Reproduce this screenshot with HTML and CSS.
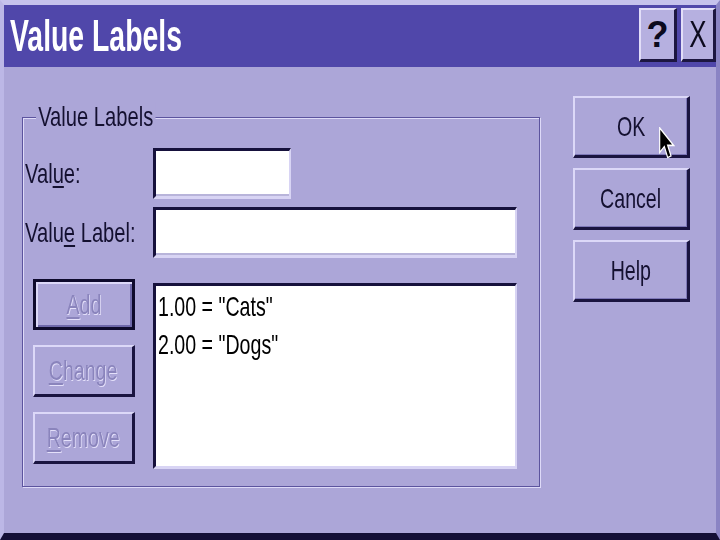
FILE: index.html
```html
<!DOCTYPE html>
<html>
<head>
<meta charset="utf-8">
<link rel="stylesheet" href="styles.css">
</head>
<body>
<div class="window">
  <div class="titlebar">
    <span class="title">Value Labels</span>
    <div class="tbtns">
      <span class="tbtn help">?</span>
      <span class="tbtn close"><span class="x">X</span></span>
    </div>
  </div>
  <div class="content">
    <div class="group">
      <span class="legend">Value Labels</span>
      <div class="row">
        <span class="lbl"><span class="sq">Val<u>u</u>e:</span></span>
        <div class="field short"></div>
      </div>
      <div class="row row2">
        <span class="lbl"><span class="sq">Valu<u>e</u> Label:</span></span>
        <div class="field long"></div>
      </div>
      <div class="row3">
        <div class="side-btns">
          <div class="btn default disabled"><span class="t"><u>A</u>dd</span></div>
          <div class="btn disabled"><span class="t"><u>C</u>hange</span></div>
          <div class="btn disabled"><span class="t"><u>R</u>emove</span></div>
        </div>
        <div class="list">
          <div class="item"><span class="sq">1.00 = "Cats"</span></div>
          <div class="item"><span class="sq">2.00 = "Dogs"</span></div>
        </div>
      </div>
    </div>
    <div class="actions">
      <div class="btn act"><span class="t">OK</span></div>
      <div class="btn act"><span class="t">Cancel</span></div>
      <div class="btn act"><span class="t">Help</span></div>
    </div>
  </div>
  <svg class="cursor" viewBox="0 0 12 20" preserveAspectRatio="none" width="16" height="34">
    <polygon points="0.5,0.5 0.5,15 4,11.5 6.5,18 9,17 6.5,10.8 11,10.8" fill="#000" stroke="#fff" stroke-width="0.9"/>
  </svg>
</div>
</body>
</html>
```
FILE: styles.css
```css
* { box-sizing: border-box; }
html, body { margin: 0; padding: 0; }
body {
  width: 720px;
  height: 540px;
  overflow: hidden;
  background: #aca6d8;
  font-family: "Liberation Sans", Arial, sans-serif;
  color: #141030;
}
.window {
  position: relative;
  width: 720px;
  height: 540px;
  background: #aca6d8;
  border-top: 5px solid #c6c2ec;
  border-left: 4px solid #bcb7e6;
  border-right: 4px solid #8a84c4;
  border-bottom: 7px solid #140f36;
  display: flex;
  flex-direction: column;
}
.titlebar {
  height: 62px;
  flex: none;
  background: #5047aa;
  display: flex;
  align-items: center;
  padding: 0 0 0 6px;
}
.title {
  display: inline-block;
  white-space: nowrap;
  color: #fff;
  font-weight: bold;
  font-size: 44px;
  transform: scaleX(0.645);
  transform-origin: left center;
  width: 180px;
}
.tbtns {
  margin-left: auto;
  display: flex;
  gap: 4px;
  align-self: flex-start;
  margin-top: 3px;
}
.tbtn {
  height: 54px;
  background: #b6b0e0;
  border-top: 2px solid #e2def8;
  border-left: 2px solid #e2def8;
  border-right: 3px solid #1c1640;
  border-bottom: 3px solid #1c1640;
  display: flex;
  align-items: center;
  justify-content: center;
  color: #0c0a1e;
  font-size: 36px;
}
.help { width: 38px; font-weight: bold; }
.close { width: 35px; }
.x { display: inline-block; transform: scaleX(0.72); }

.content {
  flex: 1;
  display: flex;
  align-items: flex-start;
  padding: 29px 0 0 18px;
}
.group {
  position: relative;
  margin-top: 21px;
  width: 518px;
  height: 370px;
  border: 1px solid #5c549e;
  box-shadow: inset 1px 1px 0 #dedaf8, 1px 1px 0 #dedaf8;
  padding: 30px 21px 0 2px;
}
.legend {
  position: absolute;
  left: 13px;
  top: -16px;
  background: #aca6d8;
  padding: 0 3px;
  font-size: 28px;
  line-height: 30px;
  white-space: nowrap;
  transform: scaleX(0.72);
  transform-origin: left center;
}
.row {
  display: flex;
  align-items: center;
  height: 51px;
}
.row2 { margin-top: 8px; }
.lbl {
  width: 128px;
  flex: none;
  font-size: 28px;
  white-space: nowrap;
}
.sq {
  display: inline-block;
  white-space: nowrap;
  transform: scaleX(0.72);
  transform-origin: left center;
}
.lbl u, .t u { text-decoration-thickness: 2px; text-underline-offset: 3px; }
.field {
  height: 51px;
  background: #ffffff;
  border-top: 3px solid #16113c;
  border-left: 3px solid #16113c;
  border-right: 2px solid #d8d4f4;
  border-bottom: 3px solid #d8d4f4;
  box-shadow: inset 0 -2px 0 #b8b4da;
}
.short { width: 138px; }
.long { width: 364px; }

.row3 {
  display: flex;
  align-items: flex-start;
  margin-top: 21px;
}
.side-btns {
  margin-left: 8px;
  width: 102px;
  flex: none;
  display: flex;
  flex-direction: column;
  gap: 15px;
}
.btn {
  background: #aca6d8;
  border-top: 2px solid #dcd8f8;
  border-left: 2px solid #dcd8f8;
  border-right: 3px solid #1a1440;
  border-bottom: 3px solid #1a1440;
  display: flex;
  align-items: center;
  justify-content: center;
  font-size: 28px;
  color: #141030;
}
.t {
  display: inline-block;
  white-space: nowrap;
  transform: scaleX(0.7);
  transform-origin: center center;
}
.side-btns .btn { height: 52px; }
.side-btns .btn.default { height: 51px; }
.btn.default {
  border: 3px solid #0e0a2c;
  box-shadow: inset 2px 2px 0 #dcd8f8, inset -2px -2px 0 #6e68aa;
}
.btn.disabled {
  color: #8a84bc;
  text-shadow: 1px 1px 0 #e4e0fa;
}
.list {
  margin-left: 18px;
  margin-top: 4px;
  width: 364px;
  height: 186px;
  flex: none;
  background: #ffffff;
  border-top: 3px solid #16113c;
  border-left: 3px solid #16113c;
  border-right: 2px solid #d8d4f4;
  border-bottom: 3px solid #d8d4f4;
  padding: 2px 0 0 2px;
}
.item {
  font-size: 28px;
  line-height: 38px;
  color: #000;
}
.item .sq { transform: scaleX(0.7); }
.actions {
  margin-left: 33px;
  width: 117px;
  flex: none;
  display: flex;
  flex-direction: column;
  gap: 10px;
}
.btn.act {
  height: 62px;
  box-shadow: inset -1px -1px 0 #7e78b8;
}
.cursor {
  position: absolute;
  left: 655px;
  top: 122px;
}
```
